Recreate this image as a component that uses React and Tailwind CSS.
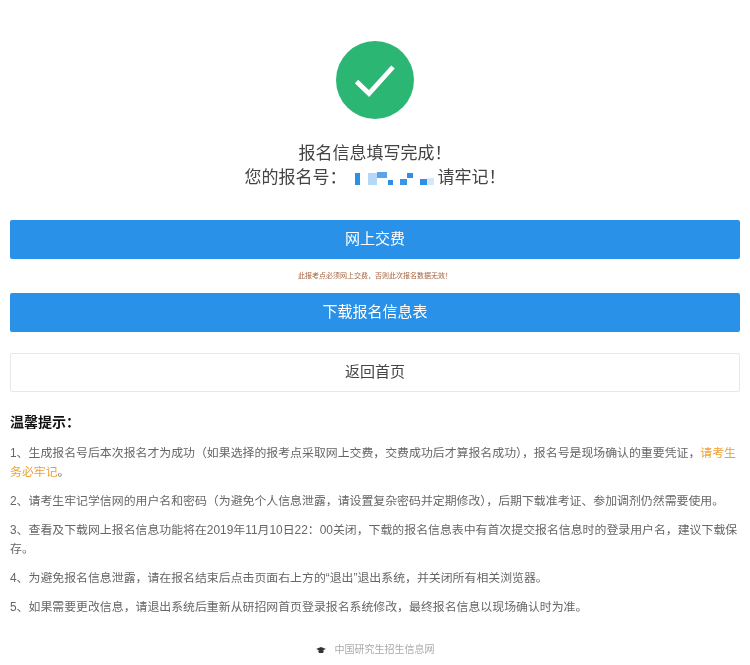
import React from "react";

const font = { fontFamily: '"Liberation Sans", "Noto Sans CJK SC", sans-serif' };

function Redacted() {
  return (
    <span className="inline-flex items-end w-[80px] h-[13px] ml-[8px] mr-[3px] blur-[0.6px]">
      <span className="w-[5px] h-[12px] bg-[#2f8fe6]" />
      <span className="w-[9px] h-[12px] ml-[8px] bg-[#b5d8f6]" />
      <span className="w-[10px] h-[6px] bg-[#5aa5ea] self-start" />
      <span className="w-[5px] h-[5px] ml-[1px] bg-[#2f8fe6]" />
      <span className="w-[7px] h-[6px] ml-[7px] bg-[#3b94e6]" />
      <span className="w-[6px] h-[5px] mb-[7px] bg-[#2f8fe6]" />
      <span className="w-[7px] h-[6px] ml-[7px] bg-[#2f8fe6]" />
      <span className="w-[7px] h-[7px] bg-[#d5e8fa]" />
    </span>
  );
}

export default function App() {
  return (
    <div style={font} className="w-[750px] h-[665px] bg-white overflow-hidden px-[10px] pt-[41px] text-[#555] blur-[0.4px]">
      <div className="w-[78px] h-[78px] mx-auto rounded-full bg-[#2bb673] flex items-center justify-center">
        <svg width="42" height="34" viewBox="0 0 42 34" fill="none">
          <path d="M2.5 18.5 L15 30.5 L39 4" stroke="#fff" strokeWidth="4.8" />
        </svg>
      </div>
      <div className="mt-[23px] text-center text-[17px] leading-[24px] text-[#444]">
        <div>报名信息填写完成！</div>
        <div className="flex items-center justify-center">
          您的报名号：
          <Redacted />
          请牢记！
        </div>
      </div>
      <button className="block w-full h-[39px] mt-[30px] bg-[#2a91e8] rounded-[2px] text-white text-[15px]">网上交费</button>
      <p className="h-[34px] leading-[33px] text-center text-[7px] text-[#a5623f]">此报考点必须网上交费，否则此次报名数据无效！</p>
      <button className="block w-full h-[39px] bg-[#2a91e8] rounded-[2px] text-white text-[15px]">下载报名信息表</button>
      <button className="block w-full h-[39px] mt-[21px] bg-white border border-[#e8e8e8] rounded-[2px] text-[#444] text-[15px]">返回首页</button>
      <h2 className="mt-[20px] text-[14px] leading-[20px] font-bold text-[#111]">温馨提示：</h2>
      <div className="mt-[12px] text-[11.9px] leading-[19px] text-[#666] space-y-[10px]">
        <p>
          1、生成报名号后本次报名才为成功（如果选择的报考点采取网上交费，交费成功后才算报名成功），报名号是现场确认的重要凭证，
          <span className="text-[#f0a030]">请考生</span>
          <br />
          <span className="text-[#f0a030]">务必牢记</span>。
        </p>
        <p>2、请考生牢记学信网的用户名和密码（为避免个人信息泄露，请设置复杂密码并定期修改），后期下载准考证、参加调剂仍然需要使用。</p>
        <p>3、查看及下载网上报名信息功能将在2019年11月10日22：00关闭，下载的报名信息表中有首次提交报名信息时的登录用户名，建议下载保存。</p>
        <p>4、为避免报名信息泄露，请在报名结束后点击页面右上方的“退出”退出系统，并关闭所有相关浏览器。</p>
        <p>5、如果需要更改信息，请退出系统后重新从研招网首页登录报名系统修改，最终报名信息以现场确认时为准。</p>
      </div>
      <div className="mt-[26px] flex items-center justify-center text-[10px] leading-[14px] text-[#aaa]">
        <svg width="10" height="6" viewBox="0 0 10 6" className="mr-[9px]">
          <path d="M0 2 L5 0 L10 2 L5 4 Z M2 3.5 L8 3.5 L7 6 L3 6 Z" fill="#333" />
        </svg>
        中国研究生招生信息网
      </div>
    </div>
  );
}
